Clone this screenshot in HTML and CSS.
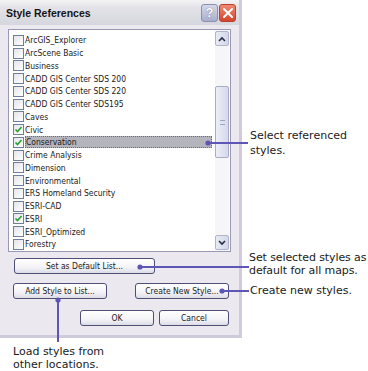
FILE: index.html
```html
<!DOCTYPE html>
<html>
<head>
<meta charset="utf-8">
<link rel="stylesheet" href="styles.css">
</head>
<body>
<div class="canvas">
  <div class="dialog">
    <div class="titlebar">
      <span class="title">Style References</span>
      <div class="tbtns">
        <span class="tbtn help">?</span>
        <span class="tbtn close"><svg width="12" height="12" viewBox="0 0 12 12"><path d="M2 2 L10 10 M10 2 L2 10" stroke="#fff" stroke-width="2" stroke-linecap="round"/></svg></span>
      </div>
    </div>
    <div class="body">
      <div class="listbox">
        <ul class="items">
          <li><span class="cb"></span>ArcGIS_Explorer</li>
          <li><span class="cb"></span>ArcScene Basic</li>
          <li><span class="cb"></span>Business</li>
          <li><span class="cb"></span>CADD GIS Center SDS 200</li>
          <li><span class="cb"></span>CADD GIS Center SDS 220</li>
          <li><span class="cb"></span>CADD GIS Center SDS195</li>
          <li><span class="cb"></span>Caves</li>
          <li><span class="cb on"><svg width="9" height="9" viewBox="0 0 9 9"><path d="M1.5 4.5 L3.5 6.5 L7.5 2" fill="none" stroke="#2aa02a" stroke-width="1.6"/></svg></span>Civic</li>
          <li class="sel"><span class="cb on"><svg width="9" height="9" viewBox="0 0 9 9"><path d="M1.5 4.5 L3.5 6.5 L7.5 2" fill="none" stroke="#2aa02a" stroke-width="1.6"/></svg></span><span class="seltext">Conservation</span></li>
          <li><span class="cb"></span>Crime Analysis</li>
          <li><span class="cb"></span>Dimension</li>
          <li><span class="cb"></span>Environmental</li>
          <li><span class="cb"></span>ERS Homeland Security</li>
          <li><span class="cb"></span>ESRI-CAD</li>
          <li><span class="cb on"><svg width="9" height="9" viewBox="0 0 9 9"><path d="M1.5 4.5 L3.5 6.5 L7.5 2" fill="none" stroke="#2aa02a" stroke-width="1.6"/></svg></span>ESRI</li>
          <li><span class="cb"></span>ESRI_Optimized</li>
          <li><span class="cb"></span>Forestry</li>
        </ul>
        <div class="scrollbar">
          <span class="arrow"><svg width="8" height="6" viewBox="0 0 8 6"><path d="M1 5 L4 2 L7 5" fill="none" stroke="#2a2a4a" stroke-width="1.6"/></svg></span>
          <div class="track">
            <div class="thumb"><span class="grip"></span></div>
          </div>
          <span class="arrow"><svg width="8" height="6" viewBox="0 0 8 6"><path d="M1 1 L4 4 L7 1" fill="none" stroke="#2a2a4a" stroke-width="1.6"/></svg></span>
        </div>
      </div>
      <div class="row row1">
        <button class="btn wide">Set as Default List...</button>
      </div>
      <div class="row row2">
        <button class="btn mid">Add Style to List...</button>
        <button class="btn mid2">Create New Style...</button>
      </div>
      <div class="row row3">
        <button class="btn ok">OK</button>
        <button class="btn cancel">Cancel</button>
      </div>
    </div>
  </div>

  <svg class="callouts" width="368" height="371" viewBox="0 0 368 371">
    <g stroke="#5d56b4" stroke-width="2" fill="#5d56b4">
      <line x1="208" y1="143" x2="248" y2="143"/>
      <circle cx="208" cy="143" r="2.6" stroke="none"/>
      <line x1="140" y1="267" x2="249" y2="267"/>
      <circle cx="140" cy="267" r="2.6" stroke="none"/>
      <line x1="222" y1="291" x2="249" y2="291"/>
      <circle cx="222" cy="291" r="2.6" stroke="none"/>
      <line x1="58" y1="300" x2="58" y2="342"/>
      <circle cx="58" cy="300" r="2.6" stroke="none"/>
    </g>
  </svg>
  <div class="note n1">Select referenced<br>styles.</div>
  <div class="note n2">Set selected styles as<br>default for all maps.</div>
  <div class="note n3">Create new styles.</div>
  <div class="note n4">Load styles from<br>other locations.</div>
</div>
</body>
</html>
```
FILE: styles.css
```css
html, body {
  margin: 0;
  padding: 0;
  background: #ffffff;
}
.canvas {
  position: relative;
  width: 368px;
  height: 371px;
  overflow: hidden;
  font-family: "DejaVu Sans Condensed", "Liberation Sans", Arial, sans-serif;
}
.dialog {
  width: 239px;
  height: 335px;
  background: #ebe8ef;
  border-right: 3px solid #cfcadc;
  border-bottom: 3px solid #cfcadc;
  box-sizing: content-box;
  display: flex;
  flex-direction: column;
}
.titlebar {
  height: 25px;
  display: flex;
  align-items: center;
  justify-content: space-between;
  background: linear-gradient(#f4f4f6 0%, #e2e2e8 30%, #d6d6de 100%);
  padding: 0 3px 0 6px;
}
.title {
  font-family: "Liberation Sans", Arial, sans-serif;
  font-weight: bold;
  font-size: 10.5px;
  color: #151515;
}
.tbtns {
  display: flex;
  gap: 1px;
}
.tbtn {
  width: 17px;
  height: 18px;
  border-radius: 3px;
  display: flex;
  align-items: center;
  justify-content: center;
  box-sizing: border-box;
}
.help {
  background: linear-gradient(#d6d8e8, #a9aecb);
  border: 1px solid #8c90b0;
  color: #ffffff;
  font-weight: bold;
  font-size: 13px;
  font-family: "Liberation Sans", Arial, sans-serif;
  text-shadow: 0 0 1px #4a4e70;
}
.close {
  background: linear-gradient(#f08a74, #d4452c);
  border: 1px solid #b8402c;
}
.body {
  flex: 1;
  padding: 4px 8px 0 8px;
  display: flex;
  flex-direction: column;
}
.listbox {
  height: 221px;
  background: #ffffff;
  border: 1px solid #9a98b4;
  display: flex;
  padding: 0 1px 0 0;
}
.items {
  list-style: none;
  margin: 0;
  padding: 4px 0 0 4px;
  flex: 1;
}
.items li {
  height: 12.75px;
  display: flex;
  align-items: center;
  font-size: 8.5px;
  color: #1a1a1a;
  white-space: nowrap;
}
.cb {
  width: 11px;
  height: 11px;
  box-sizing: border-box;
  border: 1px solid #6f7f98;
  background: linear-gradient(135deg, #e4e4ea, #ffffff);
  margin-right: 1px;
  display: flex;
  align-items: center;
  justify-content: center;
  flex: none;
}
.items li.sel {
  padding-right: 3px;
}
.seltext {
  flex: 1;
  height: 12px;
  line-height: 12px;
  background: #b4b4bc;
  outline: 1px dotted #6c6c70;
  outline-offset: -1px;
  padding-left: 1px;
}
.scrollbar {
  width: 14px;
  display: flex;
  flex-direction: column;
  padding: 1px 0;
  background: #f6f6f8;
}
.arrow {
  height: 15px;
  box-sizing: border-box;
  border: 1px solid #b0b4c8;
  border-radius: 2px;
  background: linear-gradient(90deg, #e8eaf4, #d4d8ea);
  display: flex;
  align-items: center;
  justify-content: center;
}
.track {
  flex: 1;
  padding-top: 40px;
  display: flex;
  flex-direction: column;
}
.thumb {
  height: 72px;
  box-sizing: border-box;
  border: 1px solid #a8acc4;
  border-radius: 2px;
  background: linear-gradient(90deg, #eceef8, #d6d9ec);
  display: flex;
  align-items: center;
  justify-content: center;
}
.grip {
  width: 5px;
  height: 5px;
  border-top: 1px solid #a0a4bc;
  border-bottom: 1px solid #a0a4bc;
  box-sizing: border-box;
}
.row {
  display: flex;
}
.row1 {
  margin-top: 6px;
  padding-left: 6px;
}
.row2 {
  margin-top: 9px;
  padding-left: 5px;
  justify-content: space-between;
  padding-right: 2px;
}
.row3 {
  margin-top: 11px;
  justify-content: flex-end;
  gap: 5px;
  padding-right: 2px;
}
.btn {
  height: 16px;
  box-sizing: border-box;
  border: 1px solid #4f4e74;
  border-radius: 3px;
  background: linear-gradient(#ffffff 0%, #f3f3f6 60%, #dcdce8 100%);
  font-family: "DejaVu Sans Condensed", "Liberation Sans", Arial, sans-serif;
  font-size: 8.5px;
  color: #1a1a1a;
  padding: 0;
  display: flex;
  align-items: center;
  justify-content: center;
}
.wide { width: 141px; }
.mid { width: 94px; }
.mid2 { width: 94px; }
.ok { width: 74px; }
.cancel { width: 70px; }
.callouts {
  position: absolute;
  left: 0;
  top: 0;
  pointer-events: none;
}
.note {
  position: absolute;
  font-family: "DejaVu Sans", Verdana, sans-serif;
  font-size: 11px;
  color: #1a1a1a;
  white-space: nowrap;
}
.n1 { left: 250px; top: 128px; line-height: 15px; }
.n2 { left: 249px; top: 252px; line-height: 12.5px; letter-spacing: -0.1px; }
.n3 { left: 250px; top: 284px; line-height: 14px; }
.n4 { left: 13px; top: 345px; line-height: 13px; }
```
